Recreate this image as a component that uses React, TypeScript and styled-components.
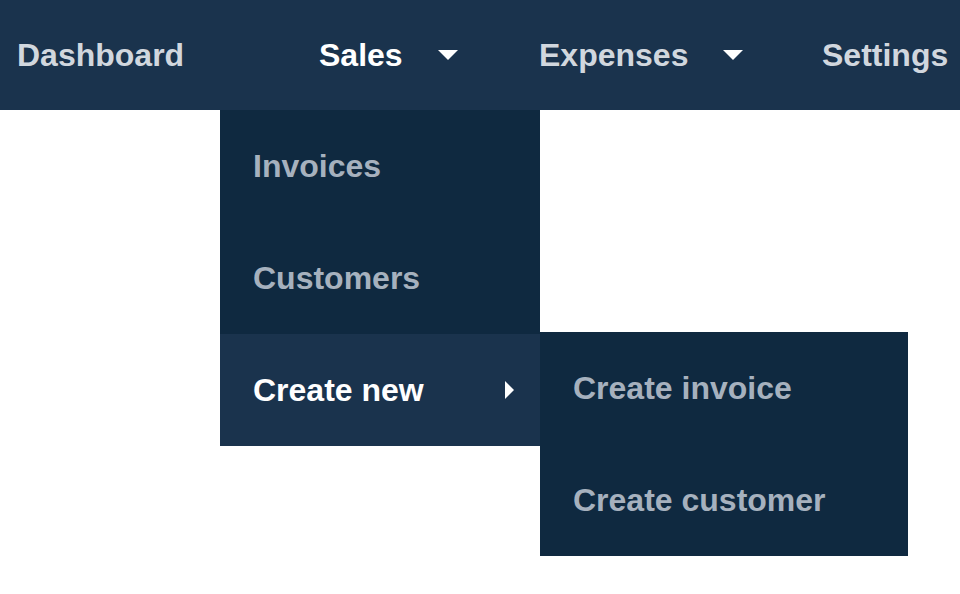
import styled, { createGlobalStyle } from 'styled-components';

const GlobalStyle = createGlobalStyle`
  body {
    margin: 0;
    background: #ffffff;
    font-family: "Liberation Sans", Arial, sans-serif;
  }
`;

type NavLink = {
  label: string;
  width: number;
  active?: boolean;
  caret?: boolean;
};

const links: NavLink[] = [
  { label: 'Dashboard', width: 303 },
  { label: 'Sales', width: 220, active: true, caret: true },
  { label: 'Expenses', width: 283, caret: true },
  { label: 'Settings', width: 154 },
];

const salesItems = ['Invoices', 'Customers'];
const createItems = ['Create invoice', 'Create customer'];

const CaretDown = () => (
  <svg width="20" height="10" viewBox="0 0 20 10">
    <path d="M0 0 L20 0 L10 10 Z" fill="currentColor" />
  </svg>
);

const CaretRight = () => (
  <svg width="9" height="18" viewBox="0 0 9 18">
    <path d="M0 0 L9 9 L0 18 Z" fill="currentColor" />
  </svg>
);

export default function App() {
  return (
    <Page>
      <GlobalStyle />
      <Header>
        <Nav>
          {links.map((link) => (
            <NavItem key={link.label} $width={link.width} $active={link.active}>
              {link.label}
              {link.caret && (
                <CaretBox>
                  <CaretDown />
                </CaretBox>
              )}
            </NavItem>
          ))}
        </Nav>
        <Dropdown>
          {salesItems.map((item) => (
            <MenuItem key={item}>{item}</MenuItem>
          ))}
          <MenuItem $active>
            Create new
            <CaretRight />
            <SubMenu>
              {createItems.map((item) => (
                <SubMenuItem key={item}>{item}</SubMenuItem>
              ))}
            </SubMenu>
          </MenuItem>
        </Dropdown>
      </Header>
    </Page>
  );
}

const Page = styled.div`
  width: 960px;
  height: 594px;
  overflow: hidden;
  background: #ffffff;
`;

const Header = styled.header`
  position: relative;
  width: 960px;
`;

const Nav = styled.nav`
  display: flex;
  height: 110px;
  background-color: #1a334d;
`;

const NavItem = styled.div<{ $width: number; $active?: boolean }>`
  flex: 0 0 ${(p) => p.$width}px;
  display: flex;
  align-items: center;
  padding-left: ${(p) => (p.$width === 303 ? 17 : 16)}px;
  box-sizing: border-box;
  white-space: nowrap;
  font-size: 32px;
  font-weight: 700;
  color: ${(p) => (p.$active ? '#ffffff' : '#d1d7de')};
`;

const CaretBox = styled.span`
  display: flex;
  margin-left: 35px;
  margin-top: -1px;
  color: #ffffff;
`;

const Dropdown = styled.div`
  position: absolute;
  top: 110px;
  left: 220px;
  width: 320px;
  background-color: #0f2940;
`;

const MenuItem = styled.div<{ $active?: boolean }>`
  position: relative;
  display: flex;
  align-items: center;
  justify-content: space-between;
  height: 112px;
  padding: 0 26px 0 33px;
  box-sizing: border-box;
  font-size: 32px;
  font-weight: 700;
  color: ${(p) => (p.$active ? '#ffffff' : '#a6b1be')};
  background-color: ${(p) => (p.$active ? '#1a334d' : 'transparent')};
`;

const SubMenu = styled.div`
  position: absolute;
  top: -2px;
  left: 100%;
  width: 368px;
  background-color: #0f2940;
`;

const SubMenuItem = styled.div`
  display: flex;
  align-items: center;
  height: 112px;
  padding-left: 33px;
  font-size: 32px;
  font-weight: 700;
  color: #a6b1be;
`;
